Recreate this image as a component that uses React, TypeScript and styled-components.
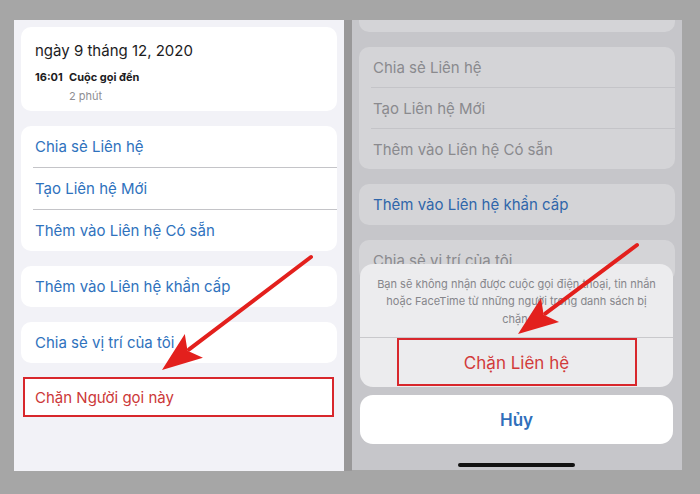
import React, { FC } from "react";
import styled, { createGlobalStyle } from "styled-components";

const GlobalStyle = createGlobalStyle`
  html, body {
    margin: 0;
    padding: 0;
    background: #a6a6a6;
  }
  body {
    font-family: Inter, "Noto Sans", "Liberation Sans", sans-serif;
  }
`;

const Page = styled.div`
  position: relative;
  width: 700px;
  height: 494px;
  box-sizing: border-box;
  padding: 20px 0 0 14px;
  display: flex;
  align-items: flex-start;
  background: #a6a6a6;
  overflow: hidden;
`;

const Divider = styled.div`
  width: 8px;
  height: 451px;
  background: #999899;
`;

const Screen = styled.div<{ $dim?: boolean }>`
  position: relative;
  width: 330px;
  height: ${(p) => (p.$dim ? "450px" : "451px")};
  box-sizing: border-box;
  padding: ${(p) => (p.$dim ? "0 7px" : "7px 7px 0")};
  display: flex;
  flex-direction: column;
  gap: 15px;
  background: ${(p) => (p.$dim ? "#c6c6ca" : "#f2f2f7")};
  overflow: hidden;
`;

const Card = styled.div<{ $dim?: boolean }>`
  background: ${(p) => (p.$dim ? "#d4d4d7" : "#ffffff")};
  border-radius: 10px;
  overflow: hidden;
  flex-shrink: 0;
`;

const StubCard = styled(Card)`
  height: 12px;
  border-radius: 0 0 10px 10px;
`;

const CallCard = styled(Card)`
  padding: 15px 14px 8px;
`;

const DateTitle = styled.div`
  font-size: 15px;
  line-height: 18px;
  color: #1c1c1e;
`;

const CallRow = styled.div`
  display: grid;
  grid-template-columns: 34px 1fr;
  margin-top: 10px;
  font-size: 11px;
  line-height: 14px;
  font-weight: 700;
  color: #1c1c1e;
`;

const Duration = styled.div`
  margin: 5px 0 0 34px;
  font-size: 11px;
  line-height: 14px;
  color: #8e8e93;
`;

type Tone = "blue" | "gray" | "dimBlue" | "red";

const toneColor: Record<Tone, string> = {
  blue: "#2f72bd",
  gray: "#8a8a8e",
  dimBlue: "#2f66aa",
  red: "#cf3535",
};

const Row = styled.div<{ $tone: Tone; $h?: number; $dim?: boolean }>`
  height: ${(p) => p.$h ?? 41}px;
  display: flex;
  align-items: center;
  padding-left: 2px;
  margin-left: 12px;
  font-size: 15px;
  color: ${(p) => toneColor[p.$tone]};
  white-space: nowrap;

  & + & {
    border-top: 1px solid ${(p) => (p.$dim ? "#c4c4c8" : "#e3e3e8")};
  }
`;

const BlockRow = styled.div`
  height: 36px;
  margin: -1px 3px 0 2px;
  display: flex;
  align-items: center;
  padding-left: 10px;
  background: #ffffff;
  border: 2px solid #d8272c;
  font-size: 15px;
  color: #cc3838;
`;

const SheetArea = styled.div`
  position: absolute;
  left: 8px;
  right: 9px;
  bottom: 0;
  display: flex;
  flex-direction: column;
  gap: 8px;
`;

const SheetGroup = styled.div`
  background: #ececee;
  border-radius: 13px;
  overflow: hidden;
`;

const Message = styled.div`
  padding: 12px 10px 9px;
  font-size: 11px;
  line-height: 17.5px;
  color: #86868b;
  text-align: center;
  white-space: nowrap;
  border-bottom: 1px solid #c9c9cc;
`;

const SheetButton = styled.div<{ $cancel?: boolean }>`
  position: relative;
  height: 49px;
  display: flex;
  align-items: center;
  justify-content: center;
  font-size: 17px;
  font-weight: ${(p) => (p.$cancel ? 600 : 400)};
  color: ${(p) => (p.$cancel ? "#2f6fbb" : "#d23a3a")};
  background: ${(p) => (p.$cancel ? "#ffffff" : "transparent")};
  border-radius: ${(p) => (p.$cancel ? "13px" : "0")};
`;

const Highlight = styled.div`
  position: absolute;
  top: 0;
  bottom: 1px;
  left: 37px;
  right: 36px;
  border: 2px solid #d8272c;
`;

const HomeBar = styled.div`
  align-self: center;
  width: 117px;
  height: 4px;
  border-radius: 2px;
  background: #111111;
  margin: 11px 0 3px;
`;

const Arrows = styled.svg`
  position: absolute;
  left: 0;
  top: 0;
  pointer-events: none;
`;

const Arrow: FC<{ x1: number; y1: number; x2: number; y2: number }> = ({
  x1,
  y1,
  x2,
  y2,
}) => {
  const dx = x2 - x1;
  const dy = y2 - y1;
  const len = Math.hypot(dx, dy);
  const ux = dx / len;
  const uy = dy / len;
  const head = 40;
  const half = 15;
  const bx = x2 - ux * head;
  const by = y2 - uy * head;
  const nx = -uy;
  const ny = ux;
  const pts = `${x2},${y2} ${bx + nx * half},${by + ny * half} ${bx + ux * 8},${by + uy * 8} ${bx - nx * half},${by - ny * half}`;
  return (
    <g>
      <line
        x1={x1}
        y1={y1}
        x2={bx + ux * 6}
        y2={by + uy * 6}
        stroke="#e3201d"
        strokeWidth={4}
        strokeLinecap="round"
      />
      <polygon points={pts} fill="#e3201d" />
    </g>
  );
};

const App: FC = () => {
  return (
    <>
      <GlobalStyle />
      <Page>
        <Screen>
          <CallCard>
            <DateTitle>ngày 9 tháng 12, 2020</DateTitle>
            <CallRow>
              <span>16:01</span>
              <span>Cuộc gọi đến</span>
            </CallRow>
            <Duration>2 phút</Duration>
          </CallCard>
          <Card>
            <Row $tone="blue">Chia sẻ Liên hệ</Row>
            <Row $tone="blue">Tạo Liên hệ Mới</Row>
            <Row $tone="blue">Thêm vào Liên hệ Có sẵn</Row>
          </Card>
          <Card>
            <Row $tone="blue">Thêm vào Liên hệ khẩn cấp</Row>
          </Card>
          <Card>
            <Row $tone="blue">Chia sẻ vị trí của tôi</Row>
          </Card>
          <BlockRow>Chặn Người gọi này</BlockRow>
        </Screen>

        <Divider />

        <Screen $dim>
          <StubCard $dim />
          <Card $dim>
            <Row $tone="gray" $h={40} $dim>
              Chia sẻ Liên hệ
            </Row>
            <Row $tone="gray" $h={40} $dim>
              Tạo Liên hệ Mới
            </Row>
            <Row $tone="gray" $h={40} $dim>
              Thêm vào Liên hệ Có sẵn
            </Row>
          </Card>
          <Card $dim>
            <Row $tone="dimBlue" $h={41} $dim>
              Thêm vào Liên hệ khẩn cấp
            </Row>
          </Card>
          <Card $dim>
            <Row $tone="gray" $h={41} $dim>
              Chia sẻ vị trí của tôi
            </Row>
          </Card>

          <SheetArea>
            <SheetGroup>
              <Message>
                Bạn sẽ không nhận được cuộc gọi điện thoại, tin nhắn
                <br />
                hoặc FaceTime từ những người trong danh sách bị
                <br />
                chặn.
              </Message>
              <SheetButton>
                Chặn Liên hệ
                <Highlight />
              </SheetButton>
            </SheetGroup>
            <SheetButton $cancel>Hủy</SheetButton>
            <HomeBar />
          </SheetArea>
        </Screen>

        <Arrows width={700} height={494} viewBox="0 0 700 494">
          <Arrow x1={311} y1={257} x2={162} y2={370} />
          <Arrow x1={637} y1={245} x2={518} y2={334} />
        </Arrows>
      </Page>
    </>
  );
};

export default App;
